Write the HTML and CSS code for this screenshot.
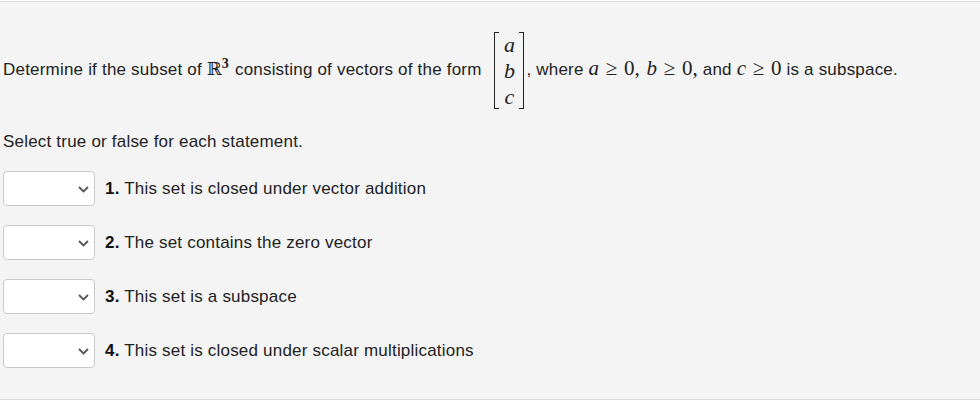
FILE: index.html
```html
<!DOCTYPE html>
<html lang="en">
<head>
    <meta charset="UTF-8">
    <title>Subspace Question</title>
    <link rel="stylesheet" href="styles.css">
</head>
<body>
<div class="question">
    <p class="prompt">
        Determine if the subset of <span class="bb">ℝ</span><sup class="sup">3</sup> consisting of vectors of the form
        <span class="matrix">
            <span class="bracket left"></span>
            <span class="entries"><i>a</i><i>b</i><i>c</i></span>
            <span class="bracket right"></span>
        </span>, where <span class="math"><i>a</i> ≥ 0, <i>b</i> ≥ 0,</span> and <span class="math"><i>c</i> ≥ 0</span> is a subspace.
    </p>

    <p class="instructions">Select true or false for each statement.</p>

    <div class="statements">
        <div class="statement">
            <div class="select-wrap">
                <select><option></option><option>True</option><option>False</option></select>
                <svg class="chevron" width="11" height="7" viewBox="0 0 11 7"><path d="M1 1 L5.5 5.5 L10 1" fill="none" stroke="#555" stroke-width="1.8"/></svg>
            </div>
            <span class="label"><b>1.</b> This set is closed under vector addition</span>
        </div>
        <div class="statement">
            <div class="select-wrap">
                <select><option></option><option>True</option><option>False</option></select>
                <svg class="chevron" width="11" height="7" viewBox="0 0 11 7"><path d="M1 1 L5.5 5.5 L10 1" fill="none" stroke="#555" stroke-width="1.8"/></svg>
            </div>
            <span class="label"><b>2.</b> The set contains the zero vector</span>
        </div>
        <div class="statement">
            <div class="select-wrap">
                <select><option></option><option>True</option><option>False</option></select>
                <svg class="chevron" width="11" height="7" viewBox="0 0 11 7"><path d="M1 1 L5.5 5.5 L10 1" fill="none" stroke="#555" stroke-width="1.8"/></svg>
            </div>
            <span class="label"><b>3.</b> This set is a subspace</span>
        </div>
        <div class="statement">
            <div class="select-wrap">
                <select><option></option><option>True</option><option>False</option></select>
                <svg class="chevron" width="11" height="7" viewBox="0 0 11 7"><path d="M1 1 L5.5 5.5 L10 1" fill="none" stroke="#555" stroke-width="1.8"/></svg>
            </div>
            <span class="label"><b>4.</b> This set is closed under scalar multiplications</span>
        </div>
    </div>
</div>
</body>
</html>
```

FILE: styles.css
```css
/* Page */
body {
    margin: 0;
    padding: 0;
    background-color: #ffffff;
    font-family: 'Liberation Sans', Arial, sans-serif;
    font-size: 17px;
    letter-spacing: 0.2px;
    color: #222;
}

/* Question panel */
.question {
    margin-top: 1px;
    height: 399px;
    padding: 0 3px;
    background-color: #f4f4f4;
    border-top: 1px solid #dcdcdc;
    border-bottom: 1px solid #dcdcdc;
    box-sizing: border-box;
}

.prompt {
    margin: 0;
    padding-top: 30px;
    line-height: 19px;
}

.bb {
    font-family: 'DejaVu Serif', serif;
    font-size: 18px;
    letter-spacing: 0;
}

.sup {
    font-family: 'Liberation Serif', serif;
    font-size: 14px;
    font-weight: bold;
    line-height: 0;
    vertical-align: 7px;
    margin-right: 1px;
}

.math {
    font-family: 'Liberation Serif', serif;
    font-size: 21px;
    letter-spacing: 0;
    word-spacing: 1.5px;
}

.math i, .entries i {
    font-family: 'Liberation Serif', serif;
    font-style: italic;
}

/* Column vector */
.matrix {
    display: inline-flex;
    align-items: stretch;
    vertical-align: middle;
    height: 77px;
    margin: 0 2px 0 8px;
}

.bracket {
    width: 4px;
    border: 1.6px solid #222;
}

.bracket.left {
    border-right: none;
}

.bracket.right {
    border-left: none;
}

.entries {
    display: flex;
    flex-direction: column;
    justify-content: space-between;
    align-items: center;
    width: 16px;
    padding: 0 2px;
    font-size: 22px;
    line-height: 26px;
    letter-spacing: 0;
}

.instructions {
    margin: 23px 0 0 0;
    line-height: 19px;
}

/* Statements */
.statements {
    display: flex;
    flex-direction: column;
    gap: 19px;
    margin-top: 20px;
}

.statement {
    display: flex;
    align-items: center;
    gap: 10px;
}

.select-wrap {
    position: relative;
    width: 92px;
    height: 35px;
}

.select-wrap select {
    appearance: none;
    -webkit-appearance: none;
    width: 100%;
    height: 100%;
    background-color: #fff;
    border: 1px solid #c9c9c9;
    border-radius: 4px;
    font-family: inherit;
    font-size: 16px;
}

.chevron {
    position: absolute;
    right: 6px;
    top: 15px;
    pointer-events: none;
}

.label b {
    font-weight: bold;
    color: #111;
}
```
